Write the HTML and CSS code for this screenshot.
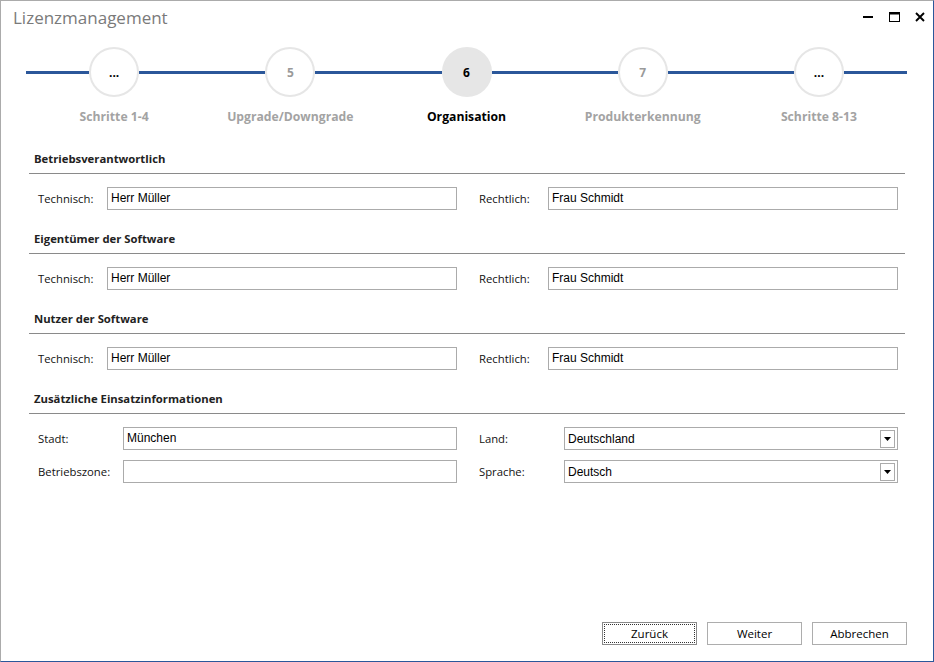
FILE: index.html
```html
<!DOCTYPE html>
<html lang="de">
<head>
<meta charset="utf-8">
<title>Lizenzmanagement</title>
<link rel="stylesheet" href="styles.css">
</head>
<body>
<div class="window">
  <div class="titlebar">
    <div class="title">Lizenzmanagement</div>
    <div class="controls">
      <svg class="ctl min" width="10" height="12" viewBox="0 0 10 12"><rect x="0" y="5" width="10" height="2" fill="#000"/></svg>
      <svg class="ctl max" width="11" height="12" viewBox="0 0 11 12"><rect x="0.5" y="1.5" width="10" height="9" fill="none" stroke="#000" stroke-width="1"/><rect x="0" y="1" width="11" height="2.5" fill="#000"/></svg>
      <svg class="ctl close" width="10" height="12" viewBox="0 0 10 12"><path d="M1 2 L9 10 M9 2 L1 10" stroke="#000" stroke-width="1.9" fill="none"/></svg>
    </div>
  </div>

  <div class="stepper">
    <div class="step">
      <div class="step-track"><span class="seg"></span><span class="circle dark">...</span><span class="seg"></span></div>
      <div class="step-label">Schritte 1-4</div>
    </div>
    <div class="step">
      <div class="step-track"><span class="seg"></span><span class="circle">5</span><span class="seg"></span></div>
      <div class="step-label">Upgrade/Downgrade</div>
    </div>
    <div class="step active">
      <div class="step-track"><span class="seg"></span><span class="circle">6</span><span class="seg"></span></div>
      <div class="step-label">Organisation</div>
    </div>
    <div class="step">
      <div class="step-track"><span class="seg"></span><span class="circle">7</span><span class="seg"></span></div>
      <div class="step-label">Produkterkennung</div>
    </div>
    <div class="step">
      <div class="step-track"><span class="seg"></span><span class="circle dark">...</span><span class="seg"></span></div>
      <div class="step-label">Schritte 8-13</div>
    </div>
  </div>

  <div class="form">
    <section class="group">
      <h2 class="group-title">Betriebsverantwortlich</h2>
      <div class="grid">
        <div class="pair"><label class="lbl">Technisch:</label><div class="field">Herr Müller</div></div>
        <div class="pair"><label class="lbl">Rechtlich:</label><div class="field">Frau Schmidt</div></div>
      </div>
    </section>
    <section class="group">
      <h2 class="group-title">Eigentümer der Software</h2>
      <div class="grid">
        <div class="pair"><label class="lbl">Technisch:</label><div class="field">Herr Müller</div></div>
        <div class="pair"><label class="lbl">Rechtlich:</label><div class="field">Frau Schmidt</div></div>
      </div>
    </section>
    <section class="group">
      <h2 class="group-title">Nutzer der Software</h2>
      <div class="grid">
        <div class="pair"><label class="lbl">Technisch:</label><div class="field">Herr Müller</div></div>
        <div class="pair"><label class="lbl">Rechtlich:</label><div class="field">Frau Schmidt</div></div>
      </div>
    </section>
    <section class="group">
      <h2 class="group-title">Zusätzliche Einsatzinformationen</h2>
      <div class="grid wide">
        <div class="pair"><label class="lbl">Stadt:</label><div class="field">München</div></div>
        <div class="pair"><label class="lbl">Land:</label><div class="field select"><span>Deutschland</span><span class="drop"><svg width="7" height="4" viewBox="0 0 7 4"><path d="M0 0 H7 L3.5 4 Z" fill="#000"/></svg></span></div></div>
        <div class="pair"><label class="lbl">Betriebszone:</label><div class="field"></div></div>
        <div class="pair"><label class="lbl">Sprache:</label><div class="field select"><span>Deutsch</span><span class="drop"><svg width="7" height="4" viewBox="0 0 7 4"><path d="M0 0 H7 L3.5 4 Z" fill="#000"/></svg></span></div></div>
      </div>
    </section>
  </div>

  <div class="footer">
    <button class="btn focused"><span>Zurück</span></button>
    <button class="btn"><span>Weiter</span></button>
    <button class="btn"><span>Abbrechen</span></button>
  </div>
</div>
</body>
</html>
```
FILE: styles.css
```css
* { box-sizing: border-box; }
html, body { margin: 0; padding: 0; background: #fff; }
body { font-family: "Open Sans", "Noto Sans", sans-serif; color: #000; }

.window {
  width: 934px;
  height: 662px;
  border-top: 1px solid #ababab;
  border-left: 1px solid #ababab;
  border-right: 1px solid #2b579a;
  border-bottom: 1px solid #2b579a;
  display: flex;
  flex-direction: column;
  background: #fff;
}

.titlebar {
  height: 34px;
  display: flex;
  align-items: center;
  justify-content: space-between;
  padding: 0 8px 0 12px;
}
.title {
  font-size: 17px;
  color: #7a7a7a;
  font-weight: 400;
  margin-top: -2px;
}
.controls { display: flex; align-items: center; margin-top: -3px; }
.ctl { display: block; }
.ctl.max { margin-left: 16px; }
.ctl.close { margin-left: 15px; }

.stepper {
  display: flex;
  margin: 12px 26px 0 25px;
}
.step { flex: 1; display: flex; flex-direction: column; align-items: center; }
.step-track { display: flex; align-items: center; width: 100%; }
.seg { flex: 1; height: 3px; background: #2b579a; }
.circle {
  width: 50px; height: 50px;
  border-radius: 50%;
  border: 2px solid #e6e6e6;
  background: #fff;
  display: flex; align-items: center; justify-content: center;
  font-size: 12px; font-weight: 700; color: #9a9a9a;
}
.circle.dark { color: #000; }
.step.active .circle { background: #e6e6e6; color: #000; }
.step-label {
  margin-top: 11px;
  font-size: 12.2px;
  font-weight: 700;
  color: #a3a3a3;
  line-height: 18px;
}
.step.active .step-label { color: #000; }

.form { padding: 0 28px; margin-top: 25px; }
.group { margin-bottom: 21px; }
.group-title {
  margin: 0;
  font-size: 11.3px;
  font-weight: 700;
  line-height: 16px;
  padding: 0 0 6px 5px;
  border-bottom: 1px solid #8a8a8a;
  color: #222;
}
.grid {
  display: grid;
  grid-template-columns: 1fr 1fr;
  column-gap: 22px;
  row-gap: 10px;
  padding: 13px 7px 0 9px;
}
.pair { display: flex; align-items: center; }
.lbl { width: 69px; flex: none; font-size: 11.3px; color: #111; }
.grid.wide .lbl { width: 85px; }
.field {
  flex: 1;
  height: 23px;
  border: 1px solid #ababab;
  font-family: "Liberation Sans", Arial, sans-serif;
  font-size: 12px;
  line-height: 20px;
  padding: 0 3px;
  color: #000;
  background: #fff;
}
.field.select { display: flex; justify-content: space-between; align-items: center; padding: 0 2px 0 3px; }
.drop {
  width: 15px; height: 18px;
  border: 1px solid #ababab;
  display: flex; align-items: center; justify-content: center;
}
.drop svg { display: block; }

.footer {
  margin-top: auto;
  display: flex;
  justify-content: flex-end;
  gap: 10px;
  padding: 0 26px 16px 0;
}
.btn {
  width: 95px; height: 23px;
  border: 1px solid #adadad;
  background: #fff;
  font-family: "Open Sans", "Noto Sans", sans-serif;
  font-size: 11.5px;
  color: #000;
  padding: 0;
  display: flex; align-items: center; justify-content: center;
}
.btn.focused { border-color: #8a8a8a; padding: 1px; }
.btn.focused span {
  flex: 1; align-self: stretch;
  border: 1px dotted #333;
  display: flex; align-items: center; justify-content: center;
}
```
